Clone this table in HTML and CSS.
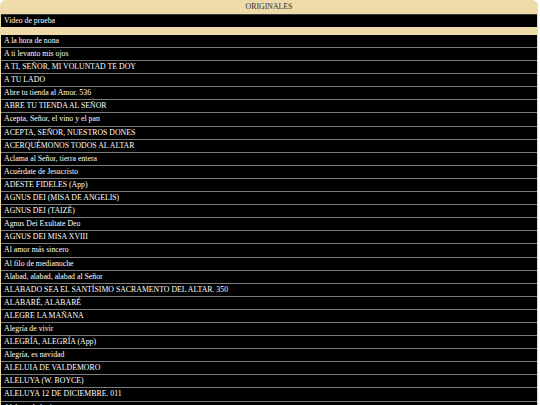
FILE: index.html
```html
<!DOCTYPE html>
<html lang="es">
<head>
<meta charset="utf-8">
<title>Originales</title>
<link rel="stylesheet" href="styles.css">
</head>
<body>
<div class="panel">
  <div class="panel-title">ORIGINALES</div>
  <div class="video">Video de prueba</div>
  <div class="gap"></div>
  <ul class="songs">
    <li>A la hora de nona</li>
    <li>A ti levanto mis ojos</li>
    <li>A TI, SEÑOR, MI VOLUNTAD TE DOY</li>
    <li>A TU LADO</li>
    <li>Abre tu tienda al Amor. 536</li>
    <li>ABRE TU TIENDA AL SEÑOR</li>
    <li>Acepta, Señor, el vino y el pan</li>
    <li>ACEPTA, SEÑOR, NUESTROS DONES</li>
    <li>ACERQUÉMONOS TODOS AL ALTAR</li>
    <li>Aclama al Señor, tierra entera</li>
    <li>Acuérdate de Jesucristo</li>
    <li>ADESTE FIDELES (App)</li>
    <li>AGNUS DEI (MISA DE ANGELIS)</li>
    <li>AGNUS DEI (TAIZÉ)</li>
    <li>Agnus Dei Exultate Deo</li>
    <li>AGNUS DEI MISA XVIII</li>
    <li>Al amor más sincero</li>
    <li>Al filo de medianoche</li>
    <li>Alabad, alabad, alabad al Señor</li>
    <li>ALABADO SEA EL SANTÍSIMO SACRAMENTO DEL ALTAR. 350</li>
    <li>ALABARÉ, ALABARÉ</li>
    <li>ALEGRE LA MAÑANA</li>
    <li>Alegría de vivir</li>
    <li>ALEGRÍA, ALEGRÍA (App)</li>
    <li>Alegría, es navidad</li>
    <li>ALELUIA DE VALDEMORO</li>
    <li>ALELUYA (W. BOYCE)</li>
    <li>ALELUYA 12 DE DICIEMBRE. 011</li>
    <li>Aleluya de la tierra</li>
  </ul>
</div>
</body>
</html>
```
FILE: styles.css
```css
html, body {
  margin: 0;
  padding: 0;
  background: #ffffff;
}

body {
  font-family: "Liberation Serif", "Times New Roman", serif;
  font-size: 7.8px;
}

.panel {
  width: 536px;
  padding: 0 1px 1px;
  background: #eedba9;
  border-radius: 6px 6px 0 0;
  overflow: hidden;
}

.panel-title {
  height: 14px;
  line-height: 14px;
  text-align: center;
  color: #2e2e2e;
}

.video {
  background: #000000;
  color: #ffffff;
  border-top: 1px solid #3a3a3a;
  height: 12px;
  line-height: 12px;
  padding-left: 3px;
}

.gap {
  height: 8px;
}

.songs {
  list-style: none;
  margin: 0;
  padding: 0;
}

.songs li {
  background: #000000;
  color: #ffffff;
  height: 12.1px;
  line-height: 12px;
  padding-left: 3px;
  border-bottom: 1px solid #7c7c7c;
  white-space: nowrap;
  overflow: hidden;
}

.songs li:first-child {
  height: 12px;
}
```
